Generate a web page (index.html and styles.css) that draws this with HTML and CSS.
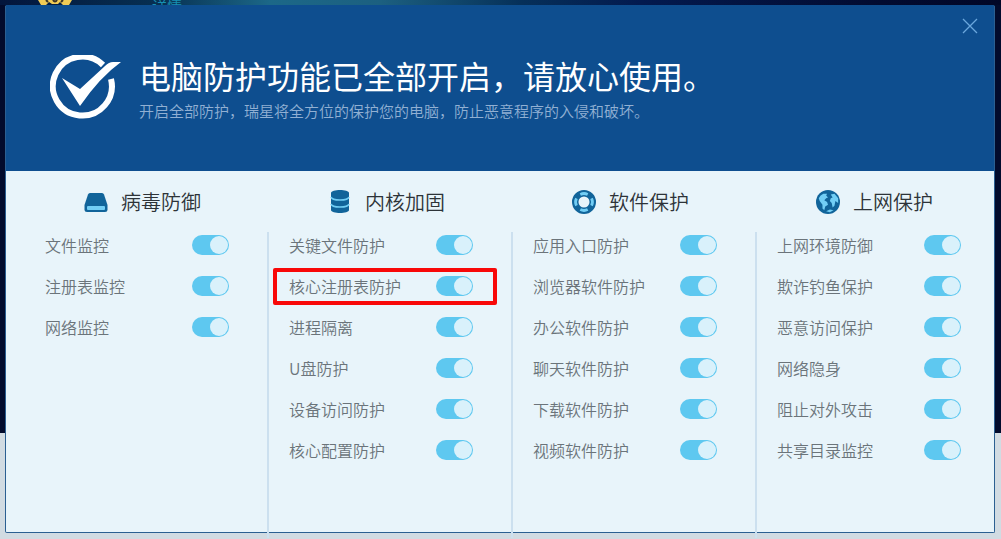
FILE: index.html
```html
<!DOCTYPE html>
<html lang="zh-CN">
<head>
    <meta charset="UTF-8">
    <meta name="viewport" content="width=device-width, initial-scale=1.0">
    <title>电脑防护</title>
    <link rel="stylesheet" href="styles.css">
</head>
<body>
    <!-- 后面的主窗口 -->
    <div class="backdrop">
        <svg class="mascot" width="34" height="6" viewBox="0 0 34 6">
            <path d="M0 0H34L31 5H25L22 2L20 4H14L11 2L8 5H3Z" fill="#f0cb55"/>
            <path d="M8 0L10 2M15 0Q17 3 19 0M25 0L23 2" fill="none" stroke="#3b3427" stroke-width="2"/>
        </svg>
        <a class="detail-link" href="#">详情</a>
    </div>

    <div class="dialog">
        <div class="header">
            <svg class="check-icon" width="72" height="68" viewBox="0 0 72 68">
                <path d="M53 10A29.500 29.500 0 1 0 61 24" fill="none" stroke="#fff" stroke-width="6"/>
                <path d="M12 23L30 34L55 11Q59 7 63 7H71Q50 22 30 51Z" fill="#fff"/>
            </svg>
            <div class="header-text">
                <h1>电脑防护功能已全部开启，请放心使用。</h1>
                <p>开启全部防护，瑞星将全方位的保护您的电脑，防止恶意程序的入侵和破坏。</p>
            </div>
            <button class="close-button" aria-label="关闭">
                <svg width="16" height="16" viewBox="0 0 16 16">
                    <path d="M1 1L15 15M15 1L1 15" stroke="#6ba7dd" stroke-width="1.300"/>
                </svg>
            </button>
        </div>

        <div class="columns">
            <div class="column">
                <h2>
                    <svg width="24" height="26" viewBox="0 0 24 26">
                        <path d="M6 4H18Q19.500 4 20 5.500L23.500 16V21Q23.500 23 21 23H3Q.5 23 .5 21V16L4 5.500Q4.500 4 6 4Z" fill="#11649a"/>
                        <rect x="3" y="17" width="18" height="4" rx="1" fill="#72cef5"/>
                    </svg>
                    病毒防御
                </h2>
                <div class="list">
                    <label class="row">文件监控<input type="checkbox" checked></label>
                    <label class="row">注册表监控<input type="checkbox" checked></label>
                    <label class="row">网络监控<input type="checkbox" checked></label>
                </div>
            </div>

            <div class="column">
                <h2>
                    <svg width="24" height="26" viewBox="0 0 24 26">
                        <path d="M3 4V21C3 25 21 25 21 21V4C21 0 3 0 3 4Z" fill="#11649a"/>
                        <path d="M3 8C4 12 20 12 21 8M3 15C4 19 20 19 21 15" fill="none" stroke="#72cef5" stroke-width="1.600"/>
                    </svg>
                    内核加固
                </h2>
                <div class="list">
                    <label class="row">关键文件防护<input type="checkbox" checked></label>
                    <label class="row marked">核心注册表防护<input type="checkbox" checked></label>
                    <label class="row">进程隔离<input type="checkbox" checked></label>
                    <label class="row">U盘防护<input type="checkbox" checked></label>
                    <label class="row">设备访问防护<input type="checkbox" checked></label>
                    <label class="row">核心配置防护<input type="checkbox" checked></label>
                </div>
            </div>

            <div class="column">
                <h2>
                    <svg width="24" height="26" viewBox="0 0 26 26">
                        <circle cx="13" cy="13" r="9.500" fill="none" stroke="#11649a" stroke-width="7"/>
                        <path d="M9 4.800A9 9 0 0 1 17 4.800M21.200 9A9 9 0 0 1 21.200 17M17 21.200A9 9 0 0 1 9 21.200M4.800 17A9 9 0 0 1 4.800 9" fill="none" stroke="#72cef5" stroke-width="3"/>
                    </svg>
                    软件保护
                </h2>
                <div class="list">
                    <label class="row">应用入口防护<input type="checkbox" checked></label>
                    <label class="row">浏览器软件防护<input type="checkbox" checked></label>
                    <label class="row">办公软件防护<input type="checkbox" checked></label>
                    <label class="row">聊天软件防护<input type="checkbox" checked></label>
                    <label class="row">下载软件防护<input type="checkbox" checked></label>
                    <label class="row">视频软件防护<input type="checkbox" checked></label>
                </div>
            </div>

            <div class="column">
                <h2>
                    <svg width="24" height="26" viewBox="0 0 26 26">
                        <circle cx="13" cy="13" r="13" fill="#11649a"/>
                        <path d="M5 6L8 4L12 4L11 6L13 8L11 9L9 11L12 13L13 16L10 18L9 22L7 20L7 16L4 12L3 9Z" fill="#72cef5"/>
                        <path d="M16 5L20 4L24 9L24 14L21 12L20 17L18 19L17 14L15 12L16 9L18 8Z" fill="#72cef5"/>
                        <path d="M11 23L15 21L19 22L15 24Z" fill="#72cef5"/>
                    </svg>
                    上网保护
                </h2>
                <div class="list">
                    <label class="row">上网环境防御<input type="checkbox" checked></label>
                    <label class="row">欺诈钓鱼保护<input type="checkbox" checked></label>
                    <label class="row">恶意访问保护<input type="checkbox" checked></label>
                    <label class="row">网络隐身<input type="checkbox" checked></label>
                    <label class="row">阻止对外攻击<input type="checkbox" checked></label>
                    <label class="row">共享目录监控<input type="checkbox" checked></label>
                </div>
            </div>
        </div>
    </div>
</body>
</html>
```
FILE: styles.css
```css
* {
    box-sizing: border-box;
}
body {
    display: flex;
    flex-direction: column;
    min-height: 100vh;
    margin: 0;
    padding: 5px 6px 6px 5px;
    overflow: hidden;
    background: #d1dbe2;
    font-family: "Noto Sans CJK SC", sans-serif;
    font-weight: 350;
}
h1, h2, p {
    margin: 0;
    font-weight: 350;
}

/* 背景 */
.backdrop {
    position: absolute;
    top: 0;
    left: 0;
    right: 0;
    height: 433px;
    overflow: hidden;
    background: linear-gradient(90deg, #03153c 0%, #073052 16%, #1c6888 27%, #1c6080 38%, #063059 52%, #031a4f 64%, #020b30 88%, #010727 100%);
}
.backdrop::after {
    content: "";
    position: absolute;
    top: 5px;
    left: 0;
    right: 0;
    bottom: 0;
    background: #020b2c;
}
.mascot {
    position: absolute;
    top: 0;
    left: 38px;
}
.detail-link {
    position: absolute;
    top: -4px;
    left: 152px;
    color: #1790b3;
    font-size: 15px;
    line-height: 20px;
    text-decoration: none;
}

/* 弹窗 */
.dialog {
    position: relative;
    display: flex;
    flex: 1;
    flex-direction: column;
    border: 1px solid #2b5f91;
    border-top-color: #0e4e8f;
    border-radius: 2px;
    background: #e8f4fa;
}
.header {
    display: flex;
    align-items: flex-start;
    height: 165px;
    padding: 48px 16px 0 44px;
    background: #0e4e8f;
}
.check-icon {
    margin-top: 1px;
}
.header-text {
    flex: 1;
    margin-left: 17px;
    margin-top: -3px;
    white-space: nowrap;
}
h1 {
    color: #fff;
    font-size: 32px;
    font-weight: 400;
    line-height: 48px;
}
.header p {
    color: #91b0d3;
    font-size: 15px;
    line-height: 24px;
}
.close-button {
    display: flex;
    margin-top: -36px;
    padding: 0;
    border: none;
    background: none;
    cursor: pointer;
}

/* 四列防护项 */
.columns {
    display: grid;
    flex: 1;
    grid-template-columns: repeat(4, 1fr);
    margin: 0 -5px -6px 17px;
}
.column {
    display: flex;
    flex-direction: column;
}
h2 {
    display: flex;
    align-items: center;
    gap: 13px;
    height: 61px;
    padding-left: 61px;
    color: #2d3338;
    font-size: 20px;
    line-height: 30px;
}
.list {
    display: flex;
    flex: 1;
    flex-direction: column;
    gap: 17px;
    padding-top: 1px;
    padding-right: 38px;
    padding-left: 20px;
    border-left: 2px solid #cce0ef;
}
.column:first-child .list {
    border-left-color: transparent;
}
.row {
    position: relative;
    display: flex;
    align-items: center;
    justify-content: space-between;
    color: #6b747a;
    font-size: 16px;
    line-height: 24px;
    white-space: nowrap;
}
.row input {
    display: flex;
    align-items: center;
    justify-content: flex-end;
    width: 37px;
    height: 20px;
    margin: 0;
    padding-right: 1px;
    border-radius: 10px;
    background: #5ec8f0;
    appearance: none;
    cursor: pointer;
}
.row input::before {
    content: "";
    width: 18px;
    height: 18px;
    border-radius: 50%;
    background: #d9f1fb;
}
/* 红框标注 */
.marked::after {
    content: "";
    position: absolute;
    top: -6px;
    right: -24px;
    bottom: -7px;
    left: -16px;
    border: 4px solid #f80808;
    border-radius: 2px;
}
```
